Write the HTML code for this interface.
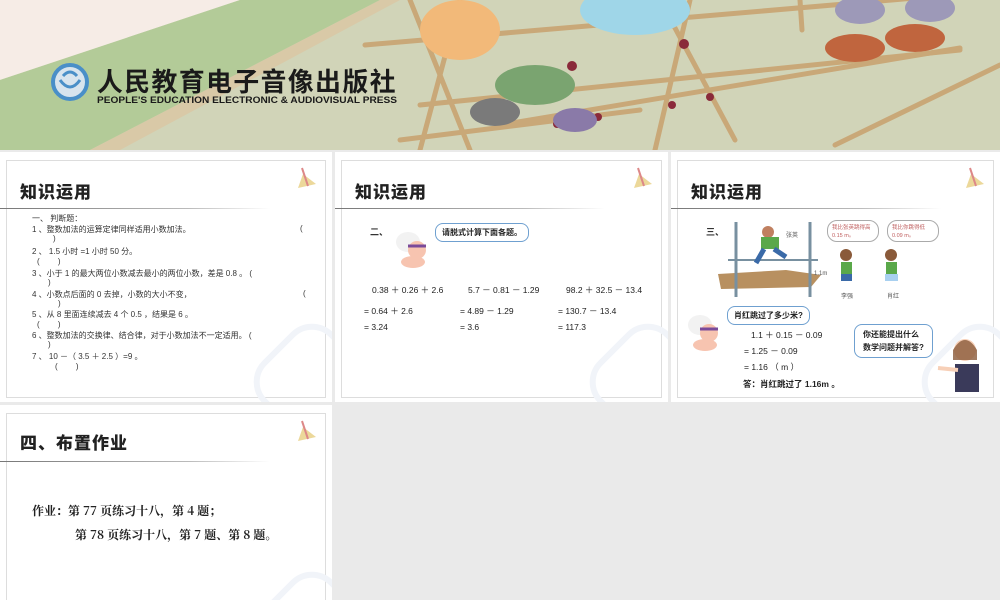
<!DOCTYPE html>
<html><head><meta charset="utf-8"><style>
*{margin:0;padding:0;box-sizing:border-box}
html,body{width:1000px;height:600px;overflow:hidden}
body{background:#eaeaea;position:relative;font-family:"Liberation Sans","Noto Sans CJK SC",sans-serif;color:#222}
.card{position:absolute;background:#fff;overflow:hidden}
.inner{position:absolute;border:1px solid #ddd;left:6px;top:8px;right:6px;bottom:4px}
.t{position:absolute;left:20px;top:26px;font-size:17px;font-weight:900;font-family:"Noto Sans CJK SC",sans-serif;letter-spacing:1px}
.hl{position:absolute;left:0;top:56px;width:270px;height:1px;background:linear-gradient(90deg,#777,#bbb 70%,rgba(200,200,200,0))}
.ico{position:absolute;right:14px;top:14px;width:24px;height:24px}
.wm{position:absolute;right:-30px;bottom:-30px;width:100px;height:100px;border:6px solid #f1f4f9;border-radius:30px;transform:rotate(45deg)}
.s{position:absolute;font-size:8px;white-space:nowrap;color:#333}
.m{position:absolute;font-size:8.5px;white-space:nowrap;color:#222}
.b{position:absolute;background:#fff;border:1px solid #6fa0d0;border-radius:8px;font-size:8px;font-weight:bold;padding:3px 6px;white-space:nowrap}
</style></head><body>
<svg style="position:absolute;left:0;top:0" width="1000" height="150">
<rect width="1000" height="150" fill="#d1d4b8"/>
<polygon points="0,0 240,0 0,80" fill="#f6ece6"/>
<polygon points="240,0 380,0 90,150 0,150 0,80" fill="#b3cb98"/>
<polygon points="380,0 400,0 120,150 90,150" fill="#d9c9a7"/>
<g stroke="#c9a878" stroke-width="5" stroke-linecap="round">
<line x1="365" y1="45" x2="950" y2="-5"/>
<line x1="420" y1="105" x2="960" y2="50"/>
<line x1="400" y1="140" x2="640" y2="110"/>
<line x1="500" y1="125" x2="960" y2="48"/>
<line x1="835" y1="145" x2="1000" y2="65"/>
<line x1="410" y1="0" x2="470" y2="150"/>
<line x1="460" y1="0" x2="420" y2="150"/>
<line x1="660" y1="0" x2="735" y2="140"/>
<line x1="690" y1="0" x2="655" y2="150"/>
<line x1="800" y1="0" x2="802" y2="30"/>
</g>
<g fill="#8a2a3a"><circle cx="572" cy="66" r="5"/><circle cx="684" cy="44" r="5"/><circle cx="672" cy="105" r="4"/><circle cx="710" cy="97" r="4"/><circle cx="557" cy="124" r="4"/><circle cx="598" cy="117" r="4"/></g>
<ellipse cx="635" cy="10" rx="55" ry="25" fill="#9fd6e8"/>
<ellipse cx="460" cy="30" rx="40" ry="30" fill="#f2b979"/>
<ellipse cx="535" cy="85" rx="40" ry="20" fill="#7aa470"/>
<ellipse cx="575" cy="120" rx="22" ry="12" fill="#8a7aa8"/>
<ellipse cx="495" cy="112" rx="25" ry="14" fill="#7a7a7a"/>
<ellipse cx="855" cy="48" rx="30" ry="14" fill="#c0653e"/>
<ellipse cx="915" cy="38" rx="30" ry="14" fill="#c0653e"/>
<ellipse cx="860" cy="10" rx="25" ry="14" fill="#9d99b8"/>
<ellipse cx="930" cy="8" rx="25" ry="14" fill="#9d99b8"/>
<circle cx="70" cy="82" r="17" fill="#d8e4ee" stroke="#4a8fc8" stroke-width="4"/>
<path d="M60 80q10 14 20 0M63 76q7-8 14 0" stroke="#4a8fc8" stroke-width="3" fill="none"/>
<text x="97" y="91" font-size="26" font-weight="bold" font-family="Noto Sans CJK SC,sans-serif" fill="#1a1a1a" letter-spacing="1.5" textLength="300" lengthAdjust="spacingAndGlyphs">人民教育电子音像出版社</text>
<text x="97" y="103" font-size="9.5" font-weight="bold" font-family="Liberation Sans,sans-serif" fill="#1a1a1a" textLength="300" lengthAdjust="spacingAndGlyphs">PEOPLE'S EDUCATION ELECTRONIC &amp; AUDIOVISUAL PRESS</text>
</svg>

<div class="card" style="left:0;top:152px;width:332px;height:250px">
<div class="inner"></div><div class="wm"></div>
<svg class="ico" viewBox="0 0 24 24"><polygon points="4,22 22,18 9,8" fill="#ecd89a"/><line x1="8" y1="2" x2="14" y2="20" stroke="#d88" stroke-width="2"/></svg>
<div class="t">知识运用</div><div class="hl"></div>
<div class="s" style="left:32px;top:61px">一、 判断题：</div>
<div class="s" style="left:32px;top:72px">1 、整数加法的运算定律同样适用小数加法。</div><div class="s" style="left:300px;top:72px">(</div><div class="s" style="left:53px;top:82px">)</div>
<div class="s" style="left:32px;top:94px">2 、 1.5 小时 =1 小时 50 分。</div><div class="s" style="left:37px;top:104px">(　　 )</div>
<div class="s" style="left:32px;top:116px">3 、小于 1 的最大两位小数减去最小的两位小数，差是 0.8 。 (</div><div class="s" style="left:48px;top:126px">)</div>
<div class="s" style="left:32px;top:137px">4 、小数点后面的 0 去掉，小数的大小不变，</div><div class="s" style="left:303px;top:137px">(</div><div class="s" style="left:58px;top:147px">)</div>
<div class="s" style="left:32px;top:157px">5 、从 8 里面连续减去 4 个 0.5 ，结果是 6 。</div><div class="s" style="left:37px;top:167px">(　　 )</div>
<div class="s" style="left:32px;top:178px">6 、整数加法的交换律、结合律，对于小数加法不一定适用。 (</div><div class="s" style="left:48px;top:188px">)</div>
<div class="s" style="left:32px;top:199px">7 、 10 －（ 3.5 ＋ 2.5 ）=9 。</div><div class="s" style="left:55px;top:209px">(　　 )</div>
</div>

<div class="card" style="left:335px;top:152px;width:333px;height:250px">
<div class="inner"></div><div class="wm"></div>
<svg class="ico" viewBox="0 0 24 24"><polygon points="4,22 22,18 9,8" fill="#ecd89a"/><line x1="8" y1="2" x2="14" y2="20" stroke="#d88" stroke-width="2"/></svg>
<div class="t">知识运用</div><div class="hl"></div>
<div class="s" style="left:35px;top:73px;font-weight:bold;font-size:9px">二、</div>
<svg style="position:absolute;left:58px;top:75px" width="45" height="45"><ellipse cx="15" cy="15" rx="12" ry="10" fill="#f2f2f2"/><circle cx="24" cy="23" r="9" fill="#f7c4b0"/><path d="M15 19h18" stroke="#7a4a9a" stroke-width="3"/><ellipse cx="20" cy="35" rx="12" ry="6" fill="#f7c4b0"/></svg>
<div class="b" style="left:100px;top:71px">请脱式计算下面各题。</div>
<div class="m" style="left:37px;top:132px">0.38 ＋ 0.26 ＋ 2.6</div>
<div class="m" style="left:133px;top:132px">5.7 － 0.81 － 1.29</div>
<div class="m" style="left:231px;top:132px">98.2 ＋ 32.5 － 13.4</div>
<div class="m" style="left:29px;top:153px">= 0.64 ＋ 2.6</div>
<div class="m" style="left:125px;top:153px">= 4.89 － 1.29</div>
<div class="m" style="left:223px;top:153px">= 130.7 － 13.4</div>
<div class="m" style="left:29px;top:170px">= 3.24</div>
<div class="m" style="left:125px;top:170px">= 3.6</div>
<div class="m" style="left:223px;top:170px">= 117.3</div>
</div>

<div class="card" style="left:671px;top:152px;width:329px;height:250px">
<div class="inner"></div><div class="wm"></div>
<svg class="ico" viewBox="0 0 24 24"><polygon points="4,22 22,18 9,8" fill="#ecd89a"/><line x1="8" y1="2" x2="14" y2="20" stroke="#d88" stroke-width="2"/></svg>
<div class="t">知识运用</div><div class="hl"></div>
<div class="s" style="left:35px;top:73px;font-weight:bold;font-size:9px">三、</div>
<svg style="position:absolute;left:45px;top:65px" width="115" height="85">
<polygon points="2,57 70,53 105,58 95,70 5,72" fill="#b89060"/>
<line x1="20" y1="5" x2="20" y2="80" stroke="#7890a0" stroke-width="3"/>
<line x1="94" y1="5" x2="94" y2="80" stroke="#7890a0" stroke-width="3"/>
<line x1="12" y1="43" x2="102" y2="43" stroke="#7890a0" stroke-width="2"/>
<circle cx="52" cy="15" r="6" fill="#c08060"/><rect x="45" y="20" width="18" height="12" fill="#5aa84a"/><path d="M48 32l-8 14M58 32l12 8" stroke="#3a6aa8" stroke-width="5"/>
<text x="70" y="20" font-size="6" fill="#555">张英</text><text x="98" y="58" font-size="6" fill="#555">1.1m</text>
</svg>
<div style="position:absolute;left:156px;top:68px;width:52px;height:22px;border:1px solid #aaa;border-radius:10px;font-size:5.5px;color:#c06060;padding:3px 4px;line-height:8px">我比张英跳得高0.15 m。</div>
<div style="position:absolute;left:216px;top:68px;width:52px;height:22px;border:1px solid #aaa;border-radius:10px;font-size:5.5px;color:#c06060;padding:3px 4px;line-height:8px">我比你跳得低0.09 m。</div>
<svg style="position:absolute;left:160px;top:95px" width="110" height="55"><circle cx="15" cy="8" r="6" fill="#8a5a3a"/><rect x="10" y="15" width="11" height="12" fill="#5aa84a"/><rect x="10" y="27" width="11" height="7" fill="#3a6aa8"/><circle cx="60" cy="8" r="6" fill="#8a5a3a"/><rect x="55" y="15" width="11" height="12" fill="#5aa84a"/><rect x="54" y="27" width="13" height="7" fill="#a8d0f0"/><text x="10" y="51" font-size="6" fill="#555">李强</text><text x="56" y="51" font-size="6" fill="#555">肖红</text></svg>
<svg style="position:absolute;left:14px;top:158px" width="45" height="45"><ellipse cx="15" cy="15" rx="12" ry="10" fill="#f2f2f2"/><circle cx="24" cy="23" r="9" fill="#f7c4b0"/><path d="M15 19h18" stroke="#7a4a9a" stroke-width="3"/><ellipse cx="20" cy="35" rx="12" ry="6" fill="#f7c4b0"/></svg>
<div class="b" style="left:56px;top:154px">肖红跳过了多少米?</div>
<div class="m" style="left:80px;top:177px">1.1 ＋ 0.15 － 0.09</div>
<div class="m" style="left:73px;top:193px">= 1.25 － 0.09</div>
<div class="m" style="left:73px;top:209px">= 1.16 （ m ）</div>
<div class="m" style="left:72px;top:226px;font-weight:bold">答：肖红跳过了 1.16m 。</div>
<div class="b" style="left:183px;top:172px;line-height:13px;padding:3px 8px">你还能提出什么<br>数学问题并解答?</div>
<svg style="position:absolute;left:262px;top:180px" width="60" height="60"><circle cx="32" cy="18" r="11" fill="#f7d0b8"/><path d="M20 18q12-20 24 0v10h-24z" fill="#8a5a3a" opacity=".8"/><rect x="22" y="32" width="24" height="28" fill="#3a3a5a"/><path d="M5 36l20 2" stroke="#f7d0b8" stroke-width="4"/></svg>
</div>

<div class="card" style="left:0;top:405px;width:332px;height:195px">
<div class="inner" style="bottom:0;border-bottom:none"></div><div class="wm" style="bottom:-80px"></div>
<svg class="ico" viewBox="0 0 24 24"><polygon points="4,22 22,18 9,8" fill="#ecd89a"/><line x1="8" y1="2" x2="14" y2="20" stroke="#d88" stroke-width="2"/></svg>
<div class="t" style="top:24px">四、布置作业</div><div class="hl"></div>
<div style="position:absolute;left:32px;top:97px;font-size:12px;font-weight:bold;font-family:'Noto Serif CJK SC',serif;white-space:nowrap">作业：第 77 页练习十八，第 4 题；</div>
<div style="position:absolute;left:75px;top:121px;font-size:12px;font-weight:bold;font-family:'Noto Serif CJK SC',serif;white-space:nowrap">第 78 页练习十八，第 7 题、第 8 题。</div>
</div>
</body></html>
